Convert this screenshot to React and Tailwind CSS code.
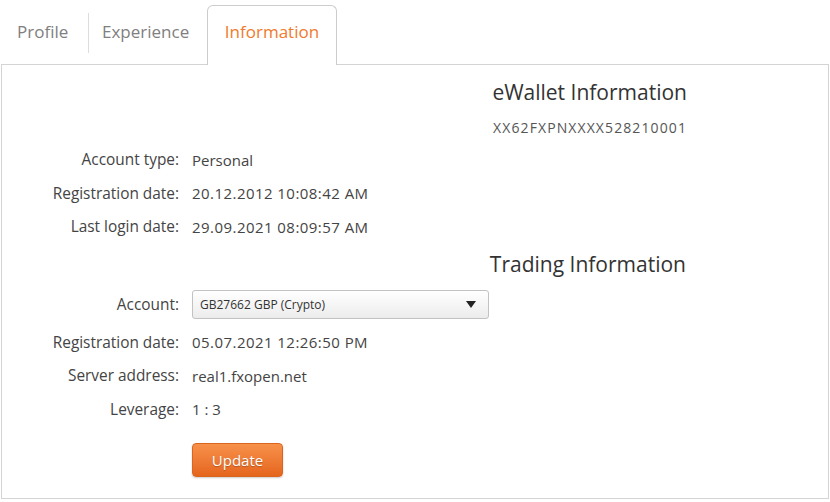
import React from "react";

const rowsTop = [
  ["Account type:", "Personal"],
  ["Registration date:", "20.12.2012 10:08:42 AM", true],
  ["Last login date:", "29.09.2021 08:09:57 AM", true],
];

const rowsBottom = [
  ["Registration date:", "05.07.2021 12:26:50 PM", true],
  ["Server address:", "real1.fxopen.net"],
  ["Leverage:", "1 : 3"],
];

const Row = ({ label, value, wide }) => (
  <div className="flex items-center h-[33.5px]">
    <div className="w-[180px] text-right pr-[3px] text-[15.4px]">{label}</div>
    <div className={wide ? "pl-[10px] tracking-[0.45px]" : "pl-[10px]"}>{value}</div>
  </div>
);

export default function App() {
  return (
    <div className="w-[830px] h-[502px] bg-white font-['Open_Sans',sans-serif] text-[15px] text-[#444]">
      {/* Tabs */}
      <div className="flex items-end h-[64px] pl-[2px]">
        <div className="flex items-center w-[86px] h-[59px] pl-[15px] pb-[4px] text-[17px] text-[#808080] mb-[1px]">
          Profile
        </div>
        <div className="w-px h-[40px] bg-[#ddd] mb-[11px]" />
        <div className="flex items-center w-[118px] h-[59px] pl-[13px] pb-[4px] text-[17px] text-[#808080] mb-[1px]">
          Experience
        </div>
        <div className="flex items-center justify-center h-[60px] w-[130px] pb-[8px] text-[17px] text-[#f07a2d] border border-b-0 border-[#ccc] rounded-t-[6px] bg-white relative top-[1px]">
          Information
        </div>
      </div>

      {/* Panel */}
      <div className="mx-[1px] h-[435px] border border-[#d4d4d4] pt-[12px]">
        <div className="w-[685px] text-right text-[21px] text-[#333] leading-[30px]">
          eWallet Information
        </div>
        <div className="w-[685px] text-right text-[14px] tracking-[1.1px] text-[#555] mt-[10px]">
          XX62FXPNXXXX528210001
        </div>

        <div className="mt-[5px]">
          {rowsTop.map(([l, v, w]) => (
            <Row key={l + v} label={l} value={v} wide={w} />
          ))}
        </div>

        <div className="w-[684px] text-right text-[21px] text-[#333] leading-[30px] mt-[5px]">
          Trading Information
        </div>

        <div className="flex items-center h-[36px] mt-[8px]">
          <div className="w-[180px] text-right pr-[3px] text-[15.4px]">Account:</div>
          <div className="ml-[10px] w-[297px] h-[29px] flex items-center justify-between px-[7px] border border-[#c2c2c2] rounded-[3px] bg-gradient-to-b from-white to-[#ececec] text-[12px] text-[#333]">
            <span>GB27662 GBP (Crypto)</span>
            <svg width="10" height="7" viewBox="0 0 10 7" className="mr-[5px]">
              <polygon points="0,0 10,0 5,7" fill="#222" />
            </svg>
          </div>
        </div>

        <div className="mt-[3px]">
          {rowsBottom.map(([l, v, w]) => (
            <Row key={l + v} label={l} value={v} wide={w} />
          ))}
        </div>

        <div className="pl-[190px] mt-[17px]">
          <button className="w-[91px] h-[34px] rounded-[4px] border border-[#d9651f] bg-gradient-to-b from-[#f7914a] to-[#e5651c] text-white text-[15px] [text-shadow:0_1px_1px_rgba(0,0,0,0.25)] shadow-[0_1px_2px_rgba(0,0,0,0.2)]">
            Update
          </button>
        </div>
      </div>
    </div>
  );
}
